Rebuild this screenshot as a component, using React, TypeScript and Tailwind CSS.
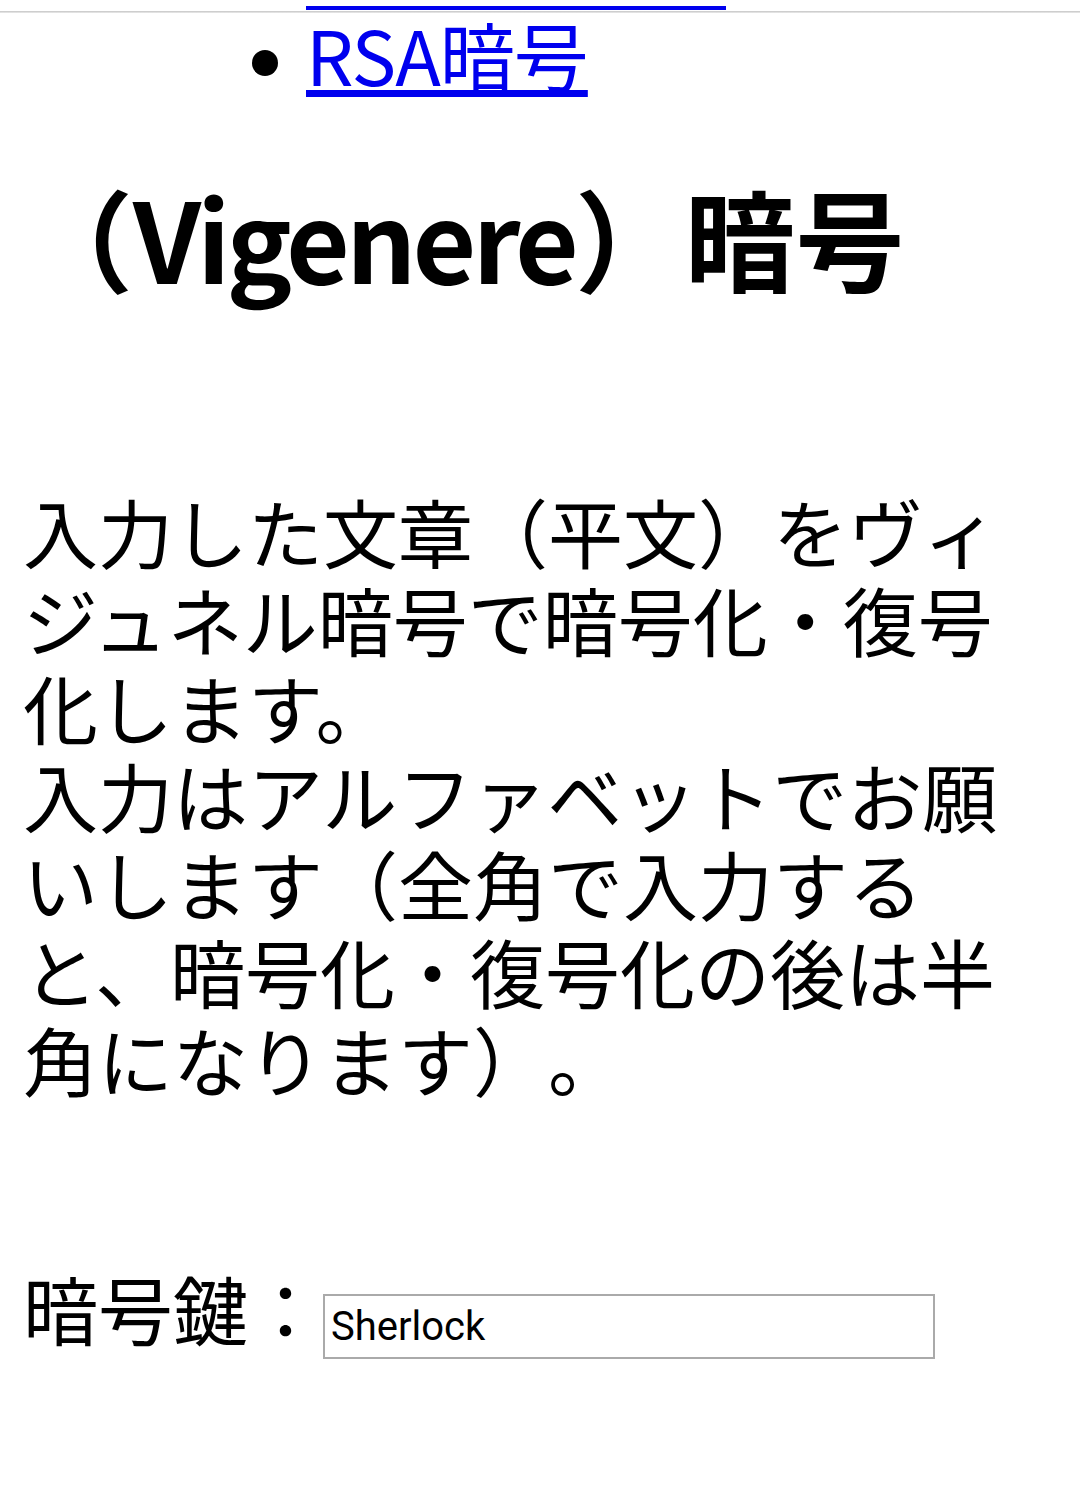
import React from "react";

const jp = "font-['Noto_Sans_CJK_JP',sans-serif]";

export default function App() {
  return (
    <div className={`relative min-h-[1489px] bg-white text-black ${jp}`}>
      {/* browser chrome shadow line at the very top */}
      <div className="absolute left-0 right-0 top-[5px] h-[2px] bg-gradient-to-b from-[#c4c4c4] to-[#ececec]" />

      {/* underline of the previous (scrolled off) list item */}
      <div className="relative ml-[306px] mt-[6px] h-[4px] w-[420px] bg-[#0000ee]" />

      <ul className="px-[23px]">
        <li className="flex items-start pl-[229px] text-[75px] leading-[88px]">
          <span className="mr-[28px] mt-[40px] h-[26px] w-[26px] shrink-0 rounded-full bg-black" />
          <a
            href="#"
            className="tracking-[-1px] text-[#0000ee] underline decoration-[7px] underline-offset-[4px]"
          >
            RSA暗号
          </a>
        </li>
      </ul>

      <main className="px-[23px]">
        <h1 className="mt-[73px] text-[110px] font-bold leading-[130px] whitespace-nowrap">
          （<span className="tracking-[-4px]">Vigenere</span>）暗号
        </h1>

        <p className="mt-[186px] text-[75px] leading-[88px] [text-spacing-trim:space-all]">
          入力した文章（平文）をヴィジュネル暗号で暗号化・復号化します。
          <br />
          入力はアルファベットでお願いします（全角で入力すると、暗号化・復号化の後は半角になります）。
        </p>

        <div className="mt-[161px] text-[75px] leading-[88px] whitespace-nowrap [text-spacing-trim:space-all]">
          <label htmlFor="key">暗号鍵：</label>
          <input
            id="key"
            type="text"
            defaultValue="Sherlock"
            className="inline-block h-[65px] w-[612px] border-2 border-[#aaaaaa] bg-white px-[6px] align-baseline font-['Roboto',sans-serif] text-[40px] leading-normal text-black outline-none"
          />
        </div>
      </main>
    </div>
  );
}
